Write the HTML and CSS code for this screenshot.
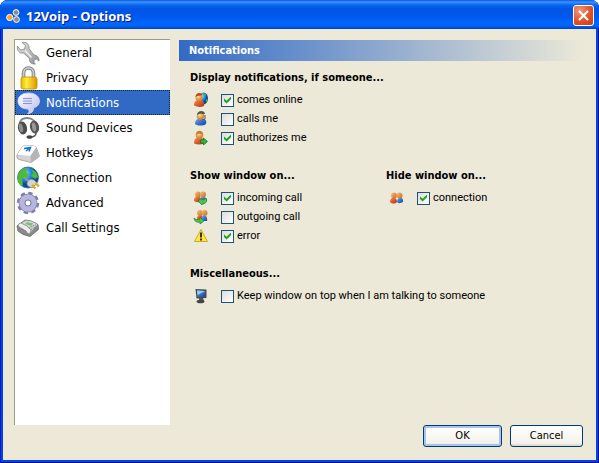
FILE: index.html
```html
<!DOCTYPE html>
<html lang="en">
<head>
<meta charset="utf-8">
<title>12Voip - Options</title>
<link rel="stylesheet" href="styles.css">
</head>
<body>
<svg class="defs" aria-hidden="true">
  <defs>
    <linearGradient id="metal" x2="1" y2="1"><stop stop-color="#e4e4e4"/><stop offset=".5" stop-color="#bdbdbd"/><stop offset="1" stop-color="#8c8c8c"/></linearGradient>
    <linearGradient id="gold" x2="1"><stop stop-color="#e8b800"/><stop offset=".35" stop-color="#ffee3c"/><stop offset="1" stop-color="#dd9500"/></linearGradient>
    <linearGradient id="lilac" x2="1" y2="1"><stop stop-color="#fff"/><stop offset="1" stop-color="#b9bbee"/></linearGradient>
    <radialGradient id="globe" cx=".35" cy=".3"><stop stop-color="#8fe0ff"/><stop offset=".6" stop-color="#2a8ae0"/><stop offset="1" stop-color="#0c4b9c"/></radialGradient>
    <radialGradient id="skin" cx=".4" cy=".35"><stop stop-color="#ffe0a0"/><stop offset="1" stop-color="#d98a30"/></radialGradient>
    <linearGradient id="red" x2="1" y2="1"><stop stop-color="#ff8a50"/><stop offset="1" stop-color="#b82c0c"/></linearGradient>
    <linearGradient id="blue" x2="1" y2="1"><stop stop-color="#6aa8f4"/><stop offset="1" stop-color="#0c3fa8"/></linearGradient>
    <linearGradient id="orange" x2="1" y2="1"><stop stop-color="#ffc080"/><stop offset="1" stop-color="#c06a20"/></linearGradient>
  </defs>
</svg>
<div class="window">
  <header class="titlebar">
    <svg class="logo" viewBox="0 0 14 14" aria-hidden="true"><circle cx="10" cy="3.500" r="2.900" fill="#8c8c8c" stroke="#fff"/><circle cx="3.700" cy="8.500" r="3.100" fill="#ffa41c" stroke="#fff"/><circle cx="10.500" cy="10.500" r="2.900" fill="#8c8c8c" stroke="#fff"/></svg>
    <h1>12Voip - Options</h1>
    <button class="close" aria-label="Close"><svg viewBox="0 0 19 19" aria-hidden="true"><path d="M5 5l9 9M14 5l-9 9" stroke="#fff" stroke-width="2.200"/></svg></button>
  </header>
  <main class="content">
    <div class="panes">
      <nav class="sidebar">
        <a href="#general"><svg viewBox="0 0 24 24"><path d="M1.500 5l3 4 4-1 1-3.500-3.500-3c4-1 7.500 1.500 7 6l5 6.500c3 0 5.500 3 5 6l-2.500-2-2.500 1v3l1.500 1c-4 .5-6.500-2-6-5.500l-6-5.500c-4 1-7-3-6-7z" fill="url(#metal)" stroke="#858585" stroke-width=".8"/><path d="M9 9.500l6.500 7" stroke="#f0f0f0" stroke-width="1.500"/></svg>General</a>
        <a href="#privacy"><svg viewBox="0 0 24 24"><path d="M7.500 12V7a5 5 0 0 1 10 0v5" fill="none" stroke="#777" stroke-width="3.600"/><path d="M7.500 12V7a5 5 0 0 1 10 0v5" fill="none" stroke="#c8c8c8" stroke-width="2"/><rect x="5" y="11" width="16" height="12" rx="2" fill="url(#gold)" stroke="#c08c00" stroke-width=".8"/></svg>Privacy</a>
        <a href="#notifications" class="selected" aria-current="page"><svg viewBox="0 0 24 24"><path d="M12.500 2c6 0 11 3 11 8 0 4-3 6-6 7 0 3-1 5-6 6 2-2 2-3 .5-5C6 18 2 15 2 10s4.500-8 10.500-8z" fill="url(#lilac)" stroke="#d6d7f5" stroke-width=".8"/><path d="M7 7.500h9M7 10h9M7 12.500h9" stroke="#8f92cc"/></svg>Notifications</a>
        <a href="#sound"><svg viewBox="0 0 24 24"><path d="M4 12C2 5 6 2 11 2c6 0 9 4 9 9" fill="none" stroke="#888" stroke-width="1.800"/><ellipse cx="6.500" cy="12" rx="4.500" ry="6.500" transform="rotate(-12 6.500 12)" fill="#4d4d4d"/><ellipse cx="5" cy="12" rx="2" ry="4.500" transform="rotate(-12 5 12)" fill="#8c8c8c"/><ellipse cx="18.500" cy="11" rx="4.500" ry="6.500" transform="rotate(-12 18.500 11)" fill="#555"/><ellipse cx="18" cy="11" rx="2" ry="4.500" transform="rotate(-12 18 11)" fill="#999"/><path d="M20 17c0 3-2 4-6 4" fill="none" stroke="#555" stroke-width="1.500"/><ellipse cx="13.500" cy="21" rx="3" ry="1.800" fill="#444"/></svg>Sound Devices</a>
        <a href="#hotkeys"><svg viewBox="0 0 24 24"><path d="M1 14L6 6q1-1.500 3-1.500l9 .5q2 .3 2.500 2L23.500 15q0 1-8.500 6.500L3 18.500Q0 17 1 14z" fill="#d4d4d4" stroke="#999" stroke-width=".8"/><path d="M1.500 13.500L6 6q1-1.500 3-1.500l9 .5q2 .3 2 2L14.500 15z" fill="#fff"/><path d="M14.500 15l5.500-8.500 3 9L15 21z" fill="#b4b4b4"/><path d="M8 7.500l6.500-1-1.500 4M14 6.500l-4 3.500" fill="none" stroke="#1677cc" stroke-width="1.500"/></svg>Hotkeys</a>
        <a href="#connection"><svg viewBox="0 0 24 24"><circle cx="12" cy="11.500" r="10.500" fill="url(#globe)" stroke="#2367a5" stroke-width=".8"/><path d="M3 7c3-5 7-5 9-5l-2 4 3 3-3 4-4-1 1 7-2 1C1 16 1 10 3 7zM15 3l5 3 2 5-3 2-4-3 2-3z" fill="#4dbb35"/><path d="M9 11q2 5 5 3" fill="none" stroke="#999" stroke-width="2"/><path d="M12 15q3-3 6-1l3 3-5 5-4-2q-2-2 0-5z" fill="#d4d4d4" stroke="#888" stroke-width=".7"/><path d="M16 19l3.500 3.500M19.500 17l3.500 3.500" stroke="#e5a81c" stroke-width="2.300"/></svg>Connection</a>
        <a href="#advanced"><svg viewBox="0 0 24 24"><circle cx="12" cy="12" r="9.200" fill="none" stroke="#7e7eaa" stroke-width="4" stroke-dasharray="4 3.225"/><circle cx="12" cy="12" r="6" fill="none" stroke="#7e7eac" stroke-width="7"/><circle cx="12" cy="12" r="6" fill="none" stroke="#b6b6de" stroke-width="5.500"/><circle cx="12" cy="12" r="3" fill="#fff" stroke="#7777a8"/></svg>Advanced</a>
        <a href="#calls"><svg viewBox="0 0 24 24"><path d="M1 10l8-6q7 0 13 4.500l.5 5L14 20.500Q6 19 2 15z" fill="#8a8a8a" stroke="#666" stroke-width=".8"/><path d="M2 9.500L9.500 4.500q7 0 12 4L14 17z" fill="#d0d0d0"/><path d="M2 9q1-2 3-2 6 2 10 7l-1 4q-3 0-4-3-3-2-7-4z" fill="#eee" stroke="#777" stroke-width=".7"/><path d="M11 6l6 1.500-2 2.500-5.500-2z" fill="#78c96b"/><path d="M13.500 11.500l6-2.500M15 13.500l5-3" stroke="#777" stroke-dasharray="1 1"/></svg>Call Settings</a>
      </nav>
      <section class="page">
        <h2>Notifications</h2>
        <div class="groups">
          <section class="group wide">
            <h3>Display notifications, if someone...</h3>
            <div class="option"><svg viewBox="0 0 16 16"><ellipse cx="10.500" cy="6.500" rx="4.500" ry="6" fill="url(#globe)"/><path d="M10 1l3 1-1 3zM13 7l2 1-2 3z" fill="#45b54a"/><path d="M1 13.500c0-4 2-5.500 5-5.500s6 1 5 6q-5 2-10-.5z" fill="url(#red)"/><circle cx="6" cy="5.500" r="3.500" fill="url(#skin)"/><path d="M2.500 5c0-5 6-5 7-2-3 1-4 0-7 2z" fill="#b8461c"/></svg><label><input type="checkbox" checked>comes online</label></div>
            <div class="option"><svg viewBox="0 0 16 16"><path d="M2 13c0-4 2-5.500 6-5.500s6 1.500 5 5.500c-3 2-8 2-11 0z" fill="url(#blue)"/><circle cx="7.500" cy="5" r="3.800" fill="url(#skin)"/><path d="M4 4c0-5 8-5 8-1-3 0-5-1-8 1z" fill="#555"/><path d="M12 4v4l-3 1" fill="none" stroke="#555"/></svg><label><input type="checkbox">calls me</label></div>
            <div class="option"><svg viewBox="0 0 16 16"><path d="M1 13.500c0-4.500 2-6 5-6s6 1.500 5 6q-5 2-10 0z" fill="url(#red)"/><circle cx="6.500" cy="5" r="3.800" fill="url(#skin)"/><path d="M3 5c0-6 7-5 7-1-3 0-4-1-7 1z" fill="#c08038"/><path d="M7.500 10h3V8l4 3.500-4 3.500v-2h-3z" fill="#2eb83a" stroke="#16752b" stroke-width=".8"/></svg><label><input type="checkbox" checked>authorizes me</label></div>
          </section>
          <section class="group">
            <h3>Show window on...</h3>
            <div class="option"><svg viewBox="0 0 16 16"><path d="M1 10c0-4 7-5 7 0v2q-4 1-7-1z" fill="url(#red)"/><path d="M7 9c2-4 7-2 7 2H8z" fill="url(#blue)"/><circle cx="5" cy="4.500" r="3" fill="url(#orange)"/><circle cx="10" cy="4.500" r="3" fill="url(#orange)"/><path d="M5 11l4-3v2c2 0 3-1 4-2 2 4-1 6-4 6v1z" fill="#48c650" stroke="#20802d" stroke-width=".7"/></svg><label><input type="checkbox" checked>incoming call</label></div>
            <div class="option"><svg viewBox="0 0 16 16"><path d="M4 9c0-4 6-4 6 0v2H4z" fill="url(#red)"/><path d="M9 8c2-3 6-1 5 4H9z" fill="url(#blue)"/><circle cx="7" cy="4" r="3" fill="url(#orange)"/><circle cx="11.500" cy="4" r="3" fill="url(#orange)"/><path d="M1 9c2 2 4 2 6 1V8l4 4-4 3v-2c-3 1-6-1-6-4z" fill="#48c650" stroke="#20802d" stroke-width=".7"/></svg><label><input type="checkbox">outgoing call</label></div>
            <div class="option"><svg viewBox="0 0 16 16"><path d="M8 1.500l6.500 12h-13z" fill="#ffe638" stroke="#c8ac30" stroke-linejoin="round"/><path d="M8 4.500v5M8 10.500v2" stroke="#222" stroke-width="1.800"/></svg><label><input type="checkbox" checked>error</label></div>
          </section>
          <section class="group">
            <h3>Hide window on...</h3>
            <div class="option"><svg viewBox="0 0 16 16"><path d="M1 12c0-6 7-6 7 0-2 2-5 2-7 0z" fill="url(#red)"/><path d="M8 12c0-6 7-6 6 0-2 1-4 2-6 0z" fill="url(#blue)"/><circle cx="5" cy="5.500" r="3" fill="url(#orange)"/><circle cx="10.500" cy="5.500" r="3" fill="url(#orange)"/></svg><label><input type="checkbox" checked>connection</label></div>
          </section>
          <section class="group wide">
            <h3>Miscellaneous...</h3>
            <div class="option"><svg viewBox="0 0 16 16"><path d="M6 10h4l1 3H6z" fill="#555"/><ellipse cx="7.500" cy="13.500" rx="4" ry="1.800" fill="#444"/><path d="M2.500 1l11 .5v8.500l-10 .5z" fill="#4a4a4a"/><path d="M4 2.500l8 .5v5.500l-7.500.5z" fill="url(#blue)"/><path d="M4 2.500l8 .5-7.500 4z" fill="#8bd0f6"/></svg><label><input type="checkbox">Keep window on top when I am talking to someone</label></div>
          </section>
        </div>
      </section>
    </div>
    <footer class="actions">
      <button class="default">OK</button>
      <button>Cancel</button>
    </footer>
  </main>
</div>
</body>
</html>
```
FILE: styles.css
```css
* { box-sizing: border-box; }
body {
  margin: 0;
  background: #fff;
  color: #000;
  font: 11px/16px "DejaVu Sans Condensed", sans-serif;
}
.defs { position: absolute; width: 0; height: 0; }
h1, h2, h3 { margin: 0; }
.window {
  display: flex;
  flex-direction: column;
  min-height: 100vh;
  padding: 0 3px 3px;
  border-radius: 8px 8px 0 0;
  background: #0842de;
  box-shadow: inset 1px 0 #0019cf, inset -1px -1px #00138c;
  overflow: hidden;
}
.titlebar {
  display: flex;
  align-items: center;
  gap: 6px;
  height: 29px;
  margin: 0 -3px;
  padding: 2px 5px 0 6px;
  background: linear-gradient(#0a58d8 0, #3a93ff 2px, #0a66f0 5px, #0055e4 9px, #0057ea 16px, #0066ff 23px, #0064f6 26px, #003ecb 29px);
}
.logo { width: 14px; height: 14px; }
h1 {
  flex: 1;
  color: #fff;
  font: bold 13px/16px "Noto Sans", sans-serif;
  text-shadow: 1px 1px #0a1883;
}
.close {
  width: 21px;
  height: 21px;
  padding: 0;
  border: 1px solid #fff;
  border-radius: 3px;
  background: radial-gradient(circle at 30% 25%, #f09878, #e4502c 55%, #c83c10);
}
.close svg { display: block; width: 19px; height: 19px; }
.content {
  flex: 1;
  display: flex;
  flex-direction: column;
  padding: 10px 11px 13px;
  background: #ece9d8;
}
.panes { flex: 1; display: flex; gap: 9px; }
.sidebar {
  flex: 0 0 156px;
  border: solid #9d9a8c;
  border-width: 1px 0 0 1px;
  background: #fff;
}
.sidebar a {
  display: flex;
  align-items: center;
  gap: 6px;
  height: 25px;
  padding-left: 1px;
  color: #000;
  font-size: 13px;
  text-decoration: none;
}
.sidebar svg { width: 24px; height: 24px; }
.sidebar .selected {
  background: #316ac5;
  color: #fff;
  outline: 1px dotted #10264a;
  outline-offset: -1px;
}
.page { flex: 1; padding-top: 1px; }
h2, h3 { font-size: 11px; }
h2 {
  height: 21px;
  padding-left: 10px;
  background: linear-gradient(90deg, #316ac5, #ece9d8);
  color: #fff;
  line-height: 21px;
}
.groups {
  display: grid;
  grid-template-columns: 196px 1fr;
  row-gap: 22px;
  padding: 9px 0 0 11px;
}
.wide { grid-column: 1 / -1; }
.group { display: flex; flex-direction: column; gap: 3px; }
h3 { margin-bottom: 3px; line-height: 16px; }
.option { display: flex; align-items: center; gap: 12px; padding-left: 3px; }
.option svg { width: 16px; height: 16px; }
.option label {
  display: flex;
  align-items: center;
  gap: 3px;
  font-family: Roboto, sans-serif;
}
input {
  appearance: none;
  display: grid;
  width: 13px;
  height: 13px;
  margin: 0;
  border: 1px solid #1c5180;
  background: linear-gradient(135deg, #dcdcd7, #fff);
}
input:checked::before {
  content: "";
  margin: 2px;
  background: #21a121;
  clip-path: polygon(0 28%, 36% 62%, 100% 0, 100% 38%, 36% 100%, 0 66%);
}
.actions { display: flex; justify-content: flex-end; gap: 8px; padding-right: 2px; }
.actions button {
  width: 73px;
  height: 22px;
  padding: 0;
  border: 1px solid #003c74;
  border-radius: 3px;
  background: linear-gradient(#fff, #f3f2eb 85%, #d9d3c6);
  color: #000;
  font: inherit;
}
.actions .default { width: 79px; box-shadow: inset 0 0 0 2px #a9c3f0; }
```
